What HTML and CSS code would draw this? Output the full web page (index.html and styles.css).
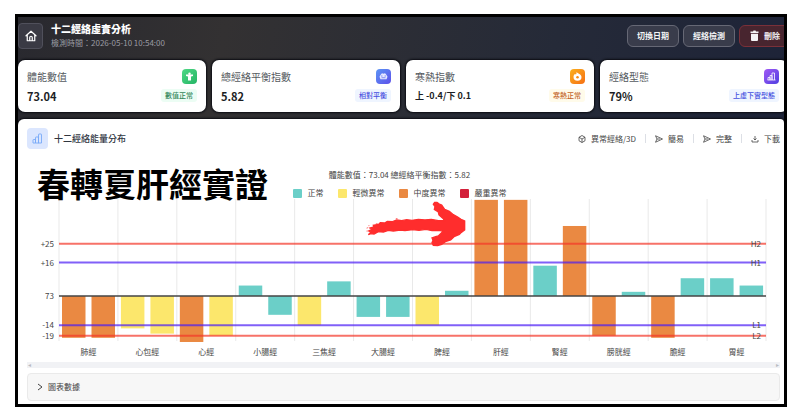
FILE: index.html
```html
<!DOCTYPE html>
<html lang="zh-Hant">
<head>
  <meta charset="UTF-8">
  <meta name="viewport" content="width=device-width, initial-scale=1.0">
  <title>十二經絡虛實分析</title>
  <link rel="stylesheet" href="styles.css">
</head>
<body>
  <div class="frame">
    <header class="topbar">
      <button type="button" class="home-btn" aria-label="首頁">
        <svg width="12" height="12" viewBox="0 0 24 24" fill="none" stroke="currentColor" stroke-width="2.4" stroke-linejoin="round" stroke-linecap="round">
          <path d="M2 11.500L12 2.500l10 9M4.500 10v11.500h15V10M9.500 21v-6a2.500 2.500 0 0 1 5 0v6"/>
        </svg>
      </button>
      <div class="heading">
        <h1>十二經絡虛實分析</h1>
        <p>檢測時間：2026-05-10 10:54:00</p>
      </div>
      <div class="top-actions">
        <button type="button">切換日期</button>
        <button type="button">經絡檢測</button>
        <button type="button" class="delete-btn">
          <svg width="9" height="11" viewBox="0 0 18 22" fill="currentColor"><path d="M1 3h5l1-2h4l1 2h5v3H1zM2 7.500h14V20a2 2 0 0 1-2 2H4a2 2 0 0 1-2-2z"/></svg>
          刪除
        </button>
      </div>
    </header>

    <section class="cards">
      <div class="card">
        <div class="card-row">
          <span class="card-label">體能數值</span>
          <span class="card-icon green">
            <svg width="9" height="9" viewBox="0 0 18 18" fill="#fff"><circle cx="9" cy="3.500" r="2.500"/><path d="M2 5h14v3l-4 1v8H6V9L2 8z"/></svg>
          </span>
        </div>
        <div class="card-row">
          <strong class="card-value">73.04</strong>
          <span class="badge badge-green">數值正常</span>
        </div>
      </div>
      <div class="card">
        <div class="card-row">
          <span class="card-label">總經絡平衡指數</span>
          <span class="card-icon blue">
            <svg width="9" height="9" viewBox="0 0 18 18"><path d="M4 4.500l2-2 3 1 3-1 2 2 3 5-2 5H3l-2-5z" fill="#e6e9ff"/><path d="M4 8h3M11 8h3M5 11.500h8" stroke="#5b6cf0" stroke-width="1.500"/></svg>
          </span>
        </div>
        <div class="card-row">
          <strong class="card-value">5.82</strong>
          <span class="badge badge-blue">相對平衡</span>
        </div>
      </div>
      <div class="card">
        <div class="card-row">
          <span class="card-label">寒熱指數</span>
          <span class="card-icon orange">
            <svg width="9" height="9" viewBox="0 0 18 18"><path d="M7 0c2 3 10 4 10 10a8 7.500 0 0 1-16 0c0-3 1-5 3-6l2 1c1-1 1-3 1-5z" fill="#fff"/><circle cx="9" cy="10.500" r="2.500" fill="#f98a12"/></svg>
          </span>
        </div>
        <div class="card-row">
          <strong class="card-value small">上 -0.4/下 0.1</strong>
          <span class="badge badge-orange">寒熱正常</span>
        </div>
      </div>
      <div class="card">
        <div class="card-row">
          <span class="card-label">經絡型態</span>
          <span class="card-icon purple">
            <svg width="9" height="9" viewBox="0 0 18 18" fill="none" stroke="#fff" stroke-width="1.600"><path d="M2 16v-5h4v5M6 16V7h4v9M10 16V2h5v14M1 16h16"/></svg>
          </span>
        </div>
        <div class="card-row">
          <strong class="card-value">79%</strong>
          <span class="badge badge-blue">上虛下實型態</span>
        </div>
      </div>
    </section>

    <main class="panel">
      <div class="panel-head">
        <span class="panel-icon">
          <svg width="11" height="11" viewBox="0 0 22 22" fill="none" stroke="currentColor" stroke-width="1.800" stroke-linejoin="round"><path d="M2 20v-6a1 1 0 0 1 1-1h4v7M7 20V9a1 1 0 0 1 1-1h5v12M13 20V3a1 1 0 0 1 1-1h4a1 1 0 0 1 1 1v17zM2 20h12"/></svg>
        </span>
        <h2>十二經絡能量分布</h2>
        <nav class="tools">
          <a href="#">
            <svg width="8" height="8" viewBox="0 0 16 16" fill="none" stroke="currentColor" stroke-width="1.600" stroke-linejoin="round"><path d="M8 1l6 3.500v7L8 15l-6-3.500v-7zM2 4.500L8 8l6-3.500M8 8v7"/></svg>
            異常經絡/3D
          </a>
          <a href="#">
            <svg width="8" height="8" viewBox="0 0 16 16" fill="none" stroke="currentColor" stroke-width="1.600" stroke-linejoin="round"><path d="M1 1.500L15 8 1 14.500 4 8zM4 8h6"/></svg>
            簡易
          </a>
          <a href="#">
            <svg width="8" height="8" viewBox="0 0 16 16" fill="none" stroke="currentColor" stroke-width="1.600" stroke-linejoin="round"><path d="M1 1.500L15 8 1 14.500 4 8zM4 8h6"/></svg>
            完整
          </a>
          <a href="#">
            <svg width="8" height="8" viewBox="0 0 16 16" fill="none" stroke="currentColor" stroke-width="1.600"><path d="M8 2v8M5 7l3 3 3-3M2 10v4h12v-4"/></svg>
            下載
          </a>
        </nav>
      </div>

      <div class="chart">
        <p class="chart-title">體能數值：73.04 總經絡平衡指數：5.82</p>
        <ul class="legend">
          <li><i class="swatch normal"></i>正常</li>
          <li><i class="swatch mild"></i>輕微異常</li>
          <li><i class="swatch medium"></i>中度異常</li>
          <li><i class="swatch severe"></i>嚴重異常</li>
        </ul>
        <svg id="plot" class="plot" viewBox="0 0 753 163" role="img" aria-label="十二經絡能量分布"></svg>
        <div class="caption">春轉夏肝經實證</div>
        <svg class="arrow" width="102" height="48" viewBox="285 150 306 144" fill="#ff2d2d">
          <path stroke="#ff2d2d" stroke-width="4" d="M295 254L303 246 296 243 306 238 300 234 312 231 310 226 326 223 331 218 344 219 352 214 368 215 380 210 395 212 410 209 426 211 445 208 465 210 484 208 505 212 523 212 520 206 507 195 505 186 493 178 495 170 490 163 494 157 501 157 508 162 515 165 524 178 538 184 550 194 563 201 573 208 584 213 584 240 574 247 568 253 552 260 542 270 526 275 515 283 503 287 490 286 486 278 489 271 486 264 497 260 505 258 514 249 520 244 508 241 486 242 468 238 447 241 428 239 405 242 390 240 370 243 355 241 340 246 325 245 312 252 302 251z"/>
          <path d="M288 235l5-3 1 3zM294 227l5-1-2 3zM289 242l4 0-2 3zM316 222l7-3-1 3zM376 206l6-2v3z"/>
        </svg>
      </div>

      <div class="scrollbar"><span>◂</span><span>▸</span></div>

      <details class="data-box">
        <summary>
          <svg width="6" height="8" viewBox="0 0 6 8" fill="none" stroke="currentColor"><path d="M1 1l4 3-4 3"/></svg>
          圖表數據
        </summary>
      </details>
    </main>
  </div>

  <script>
    const colors = { n: '#6bcfc8', y: '#fce76c', o: '#ea8942' };

    // name, left value + level, right value + level (relative to the average line)
    const meridians = [
      ['肺經', -20, 'o', -20, 'o'],
      ['心包經', -15.5, 'y', -18, 'y'],
      ['心經', -22, 'o', -19, 'y'],
      ['小腸經', 5, 'n', -9, 'n'],
      ['三焦經', -14, 'y', 7, 'n'],
      ['大腸經', -10, 'n', -10, 'n'],
      ['脾經', -14, 'y', 2.5, 'n'],
      ['肝經', 46, 'o', 46, 'o'],
      ['腎經', 14.5, 'n', 33.5, 'o'],
      ['膀胱經', -19, 'o', 2, 'n'],
      ['膽經', -20, 'o', 8.5, 'n'],
      ['胃經', 8.5, 'n', 5, 'n']
    ];

    const limits = [
      [25, '+25', 'H2', 'limit-red'],
      [16, '+16', 'H1', 'limit-blue'],
      [-14, '-14', 'L1', 'limit-blue'],
      [-19, '-19', 'L2', 'limit-red']
    ];

    const plotLeft = 32, plotRight = 739, plotTop = 0, plotBottom = 142, zero = 97;
    const scale = 2.09;
    const step = (plotRight - plotLeft) / meridians.length;
    let out = '';

    for (let i = 0; i <= meridians.length; i++) {
      const x = plotLeft + i * step;
      out += `<line class="grid" x1="${x}" x2="${x}" y1="${plotTop}" y2="${plotBottom}"/>`;
    }

    function bar(x, value, level) {
      const h = Math.abs(value) * scale;
      const y = value > 0 ? zero - h : zero;
      return `<rect x="${x}" y="${y}" width="23.5" height="${h}" fill="${colors[level]}"/>`;
    }

    meridians.forEach((m, i) => {
      const x = plotLeft + i * step;
      out += bar(x + 3, m[1], m[2]) + bar(x + 32.5, m[3], m[4]);
      out += `<text x="${x + step / 2}" y="156" text-anchor="middle">${m[0]}</text>`;
    });

    out += `<line class="zero" x1="${plotLeft}" x2="${plotRight}" y1="${zero}" y2="${zero}"/>`;
    out += `<text x="27" y="${zero + 3}" text-anchor="end">73</text>`;

    limits.forEach(([value, label, name, cls]) => {
      const y = zero - value * scale;
      out += `<line class="${cls}" x1="${plotLeft}" x2="${plotRight}" y1="${y}" y2="${y}"/>`;
      out += `<text x="27" y="${y + 3}" text-anchor="end">${label}</text>`;
      out += `<text x="734" y="${y + 3}" text-anchor="end">${name}</text>`;
    });

    document.getElementById('plot').innerHTML = out;
  </script>
</body>
</html>
```

FILE: styles.css
```css
* {
  box-sizing: border-box;
}
body {
  margin: 0;
  padding: 14px 13px 11px 15px;
  background: #fff;
  font-family: "Noto Sans CJK TC", sans-serif;
  font-size: 8px;
  line-height: 12px;
  color: #444;
}
h1, h2, p, ul {
  margin: 0;
  padding: 0;
}
button {
  font: inherit;
  cursor: pointer;
}
svg {
  flex: none;
}
.frame {
  border: 3px solid #000;
  background: linear-gradient(100deg, #29292f 0%, #333132 25%, #252a38 65%, #1c2238 100%);
  overflow: hidden;
}

/* header */
.topbar {
  display: flex;
  align-items: center;
  height: 43px;
  padding-bottom: 6px;
}
.home-btn {
  display: flex;
  align-items: center;
  justify-content: center;
  width: 25px;
  height: 26px;
  padding: 0;
  color: #fff;
  background: #3a3a44;
  border: 1px solid #50505b;
  border-radius: 4px;
}
.heading {
  margin-left: 8px;
}
.heading h1 {
  font-size: 10px;
  line-height: 14px;
  font-weight: 900;
  color: #fff;
}
.heading p {
  line-height: 14px;
  color: #9b9ca3;
}
.top-actions {
  display: flex;
  gap: 4px;
  margin-left: auto;
  margin-right: -7px;
}
.top-actions button {
  display: flex;
  align-items: center;
  gap: 5px;
  height: 22px;
  padding: 0 9px;
  font-weight: 700;
  white-space: nowrap;
  color: #f4f4f6;
  background: #393c4b;
  border: 1px solid #666875;
  border-radius: 6px;
}
.top-actions .delete-btn {
  padding: 0 10px;
  background: #48252f;
  border-color: #7a3039;
}

/* summary cards */
.cards {
  display: grid;
  grid-template-columns: repeat(4, 1fr);
  gap: 6px;
  margin-right: -4px;
}
.card {
  display: flex;
  flex-direction: column;
  gap: 4px;
  height: 52px;
  padding: 9px;
  background: #fff;
  border-radius: 7px;
  box-shadow: 0 0 2px 1px #0b0c12;
}
.card-row {
  display: flex;
  align-items: center;
  justify-content: space-between;
  height: 15px;
}
.card-label {
  font-size: 10px;
  color: #555a60;
}
.card-value {
  font-size: 11px;
  color: #1c1e24;
}
.card-value.small {
  font-size: 9px;
}
.card-icon {
  display: flex;
  align-items: center;
  justify-content: center;
  width: 15px;
  height: 15px;
  border-radius: 4px;
}
.green {
  background: linear-gradient(135deg, #4fd885, #25b565);
}
.blue {
  background: linear-gradient(135deg, #5b95f5, #5d50ea);
}
.orange {
  background: linear-gradient(135deg, #fbb01f, #f66f14);
}
.purple {
  background: linear-gradient(135deg, #a159f5, #4f3fe0);
}
.badge {
  padding: 0 4px;
  font-size: 7px;
  line-height: 13px;
  font-weight: 500;
  border-radius: 3px;
}
.badge-green {
  color: #35885c;
  background: #ecfdf4;
}
.badge-blue {
  color: #4550e0;
  background: #eff5ff;
}
.badge-orange {
  color: #c4682a;
  background: #fffbea;
}

/* chart panel */
.panel {
  margin-top: 7px;
  padding: 9px 4px 3px 9px;
  background: #fff;
  border-radius: 6px 4px 0 0;
  box-shadow: 0 0 2px 1px #0b0c12;
}
.panel-head {
  display: flex;
  align-items: center;
}
.panel-icon {
  display: flex;
  align-items: center;
  justify-content: center;
  width: 21px;
  height: 21px;
  color: #78aaf8;
  background: #dbe6fe;
  border-radius: 4px;
}
.panel-head h2 {
  margin-left: 6px;
  font-size: 9px;
  font-weight: 500;
  color: #30363f;
}
.tools {
  display: flex;
  align-items: center;
  margin-left: auto;
}
.tools a {
  display: flex;
  align-items: center;
  gap: 5px;
  height: 9px;
  padding: 0 9px;
  color: #444;
  text-decoration: none;
  border-left: 1px solid #dcdfe5;
}
.tools a:first-child {
  border-left: none;
}
.tools a:last-child {
  padding-right: 0;
}
.chart {
  position: relative;
  padding-top: 20px;
}
.chart-title {
  padding-right: 8px;
  text-align: center;
}
.legend {
  display: flex;
  justify-content: center;
  gap: 14px;
  margin-top: 6px;
  padding-right: 8px;
  list-style: none;
}
.legend li {
  display: flex;
  align-items: center;
  gap: 6px;
}
.swatch {
  width: 9px;
  height: 9px;
  border-radius: 1px;
}
.normal {
  background: #6bcfc8;
}
.mild {
  background: #fce76c;
}
.medium {
  background: #ea8942;
}
.severe {
  background: #d3203a;
}
.plot {
  display: block;
  width: 100%;
}
.plot text {
  font-size: 8px;
  fill: #444;
}
.grid {
  stroke: #e9e9e9;
}
.zero {
  stroke: #444;
  stroke-width: 1.5;
}
.limit-red {
  stroke: rgba(244, 54, 40, 0.7);
  stroke-width: 2;
}
.limit-blue {
  stroke: rgba(76, 29, 245, 0.7);
  stroke-width: 2;
}
/* notes drawn over the chart */
.caption {
  position: absolute;
  top: 14px;
  left: 10px;
  font-size: 33px;
  line-height: 40px;
  font-weight: 700;
  color: #000;
}
.arrow {
  position: absolute;
  top: 51px;
  left: 338px;
}
.scrollbar {
  display: flex;
  justify-content: space-between;
  height: 6px;
  padding: 0 1px;
  font-size: 6px;
  line-height: 6px;
  color: #b9bbc2;
  background: #f1f2f5;
}
.data-box {
  margin-top: 5px;
  background: #f7f7f7;
  border: 1px solid #eaeaea;
  border-radius: 4px;
}
.data-box summary {
  display: flex;
  align-items: center;
  gap: 5px;
  height: 26px;
  padding: 0 9px;
  list-style: none;
  cursor: pointer;
}
```
